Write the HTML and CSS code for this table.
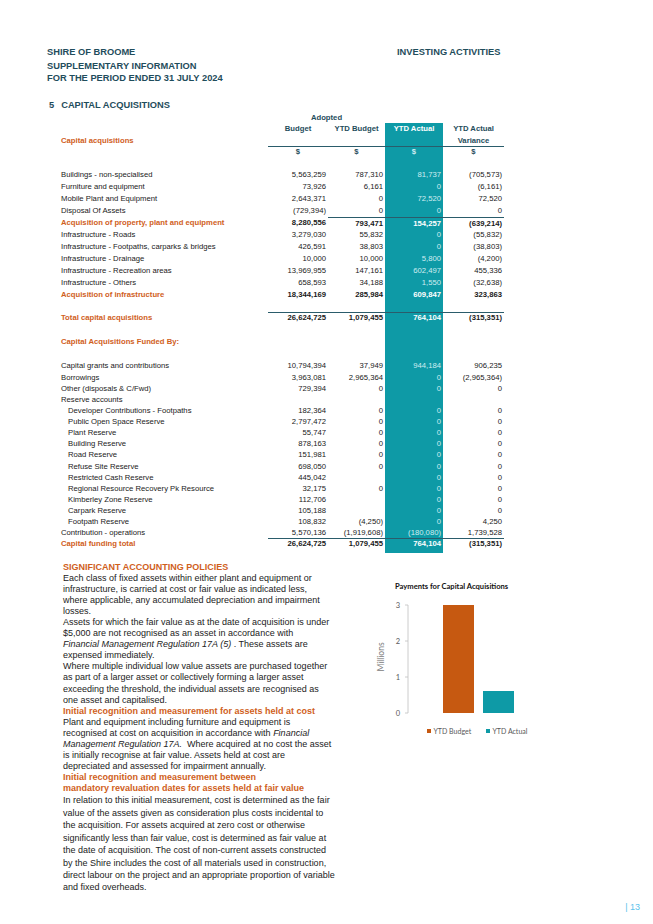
FILE: index.html
```html
<!DOCTYPE html>
<html lang="en">
<head>
<meta charset="utf-8">
<title>Shire of Broome - Capital Acquisitions</title>
<link rel="stylesheet" href="styles.css">
</head>
<body>
<div class="page">
  <header class="top">
    <div class="top-left">
      <div class="l1">SHIRE OF BROOME</div>
      <div class="l2">SUPPLEMENTARY INFORMATION</div>
      <div class="l3">FOR THE PERIOD ENDED 31 JULY 2024</div>
    </div>
    <div class="top-right">INVESTING ACTIVITIES</div>
  </header>

  <h2 class="sec"><span class="num">5</span>CAPITAL ACQUISITIONS</h2>

  <div class="tbl">
    <div class="row adopted"><div class="lbl"></div><div class="span2">Adopted</div></div>
    <div class="row hd"><div class="lbl"></div><div>Budget</div><div>YTD Budget</div><div class="act">YTD Actual</div><div>YTD Actual</div></div>
    <div class="row hd"><div class="lbl orange">Capital acquisitions</div><div></div><div></div><div class="act"></div><div>Variance</div></div>
    <div class="row hd dollar rule"><div class="lbl"></div><div>$</div><div>$</div><div class="act">$</div><div>$</div></div>
    <div class="row sp sp1"><div class="lbl"></div><div></div><div></div><div class="act"></div><div></div></div>

    <div class="row"><div class="lbl">Buildings - non-specialised</div><div>5,563,259</div><div>787,310</div><div class="act">81,737</div><div>(705,573)</div></div>
    <div class="row"><div class="lbl">Furniture and equipment</div><div>73,926</div><div>6,161</div><div class="act">0</div><div>(6,161)</div></div>
    <div class="row"><div class="lbl">Mobile Plant and Equipment</div><div>2,643,371</div><div>0</div><div class="act">72,520</div><div>72,520</div></div>
    <div class="row"><div class="lbl">Disposal Of Assets</div><div>(729,394)</div><div>0</div><div class="act">0</div><div>0</div></div>
    <div class="row b rule-thin"><div class="lbl">Acquisition of property, plant and equipment</div><div class="nr">8,280,556</div><div>793,471</div><div class="act">154,257</div><div>(639,214)</div></div>
    <div class="row"><div class="lbl">Infrastructure - Roads</div><div>3,279,030</div><div>55,832</div><div class="act">0</div><div>(55,832)</div></div>
    <div class="row"><div class="lbl">Infrastructure - Footpaths, carparks &amp; bridges</div><div>426,591</div><div>38,803</div><div class="act">0</div><div>(38,803)</div></div>
    <div class="row"><div class="lbl">Infrastructure - Drainage</div><div>10,000</div><div>10,000</div><div class="act">5,800</div><div>(4,200)</div></div>
    <div class="row"><div class="lbl">Infrastructure - Recreation areas</div><div>13,969,955</div><div>147,161</div><div class="act">602,497</div><div>455,336</div></div>
    <div class="row"><div class="lbl">Infrastructure - Others</div><div>658,593</div><div>34,188</div><div class="act">1,550</div><div>(32,638)</div></div>
    <div class="row b"><div class="lbl">Acquisition of infrastructure</div><div>18,344,169</div><div>285,984</div><div class="act">609,847</div><div>323,863</div></div>
    <div class="row sp sp2"><div class="lbl"></div><div></div><div></div><div class="act"></div><div></div></div>
    <div class="row b rule"><div class="lbl">Total capital acquisitions</div><div>26,624,725</div><div>1,079,455</div><div class="act">764,104</div><div>(315,351)</div></div>
    <div class="row sp"><div class="lbl"></div><div></div><div></div><div class="act"></div><div></div></div>
    <div class="row b"><div class="lbl">Capital Acquisitions Funded By:</div><div></div><div></div><div class="act"></div><div></div></div>
    <div class="row sp sp3"><div class="lbl"></div><div></div><div></div><div class="act"></div><div></div></div>

    <div class="row r2"><div class="lbl">Capital grants and contributions</div><div>10,794,394</div><div>37,949</div><div class="act">944,184</div><div>906,235</div></div>
    <div class="row r2"><div class="lbl">Borrowings</div><div>3,963,081</div><div>2,965,364</div><div class="act">0</div><div>(2,965,364)</div></div>
    <div class="row r2"><div class="lbl">Other (disposals &amp; C/Fwd)</div><div>729,394</div><div>0</div><div class="act">0</div><div>0</div></div>
    <div class="row r2"><div class="lbl">Reserve accounts</div><div></div><div></div><div class="act"></div><div></div></div>
    <div class="row r2 ind"><div class="lbl">Developer Contributions - Footpaths</div><div>182,364</div><div>0</div><div class="act">0</div><div>0</div></div>
    <div class="row r2 ind"><div class="lbl">Public Open Space Reserve</div><div>2,797,472</div><div>0</div><div class="act">0</div><div>0</div></div>
    <div class="row r2 ind"><div class="lbl">Plant Reserve</div><div>55,747</div><div>0</div><div class="act">0</div><div>0</div></div>
    <div class="row r2 ind"><div class="lbl">Building Reserve</div><div>878,163</div><div>0</div><div class="act">0</div><div>0</div></div>
    <div class="row r2 ind"><div class="lbl">Road Reserve</div><div>151,981</div><div>0</div><div class="act">0</div><div>0</div></div>
    <div class="row r2 ind"><div class="lbl">Refuse Site Reserve</div><div>698,050</div><div>0</div><div class="act">0</div><div>0</div></div>
    <div class="row r2 ind"><div class="lbl">Restricted Cash Reserve</div><div>445,042</div><div></div><div class="act">0</div><div>0</div></div>
    <div class="row r2 ind"><div class="lbl">Regional Resource Recovery Pk Resource</div><div>32,175</div><div>0</div><div class="act">0</div><div>0</div></div>
    <div class="row r2 ind"><div class="lbl">Kimberley Zone Reserve</div><div>112,706</div><div></div><div class="act">0</div><div>0</div></div>
    <div class="row r2 ind"><div class="lbl">Carpark Reserve</div><div>105,188</div><div></div><div class="act">0</div><div>0</div></div>
    <div class="row r2 ind"><div class="lbl">Footpath Reserve</div><div>108,832</div><div>(4,250)</div><div class="act">0</div><div>4,250</div></div>
    <div class="row r2"><div class="lbl">Contribution - operations</div><div>5,570,136</div><div>(1,919,608)</div><div class="act">(180,080)</div><div>1,739,528</div></div>
    <div class="row r2 b rule"><div class="lbl">Capital funding total</div><div>26,624,725</div><div>1,079,455</div><div class="act">764,104</div><div>(315,351)</div></div>
    <div class="row sp sp4"><div class="lbl"></div><div></div><div></div><div class="act"></div><div></div></div>
  </div>

  <div class="bottom">
    <div class="policies">
      <h3>SIGNIFICANT ACCOUNTING POLICIES</h3>
      <p>Each class of fixed assets within either plant and equipment or<br>infrastructure, is carried at cost or fair value as indicated less,<br>where applicable, any accumulated depreciation and impairment<br>losses.</p>
      <p>Assets for which the fair value as at the date of acquisition is under<br>$5,000 are not recognised as an asset in accordance with<br><em>Financial Management Regulation 17A (5)</em> . These assets are<br>expensed immediately.</p>
      <p>Where multiple individual low value assets are purchased together<br>as part of a larger asset or collectively forming a larger asset<br>exceeding the threshold, the individual assets are recognised as<br>one asset and capitalised.</p>
      <h3>Initial recognition and measurement for assets held at cost</h3>
      <p>Plant and equipment including furniture and equipment is<br>recognised at cost on acquisition in accordance with <em>Financial<br>Management Regulation 17A.</em>&nbsp; Where acquired at no cost the asset<br>is initially recognise at fair value. Assets held at cost are<br>depreciated and assessed for impairment annually.</p>
      <h3>Initial recognition and measurement between<br>mandatory revaluation dates for assets held at fair value</h3>
      <p class="last">In relation to this initial measurement, cost is determined as the fair<br>value of the assets given as consideration plus costs incidental to<br>the acquisition. For assets acquired at zero cost or otherwise<br>significantly less than fair value, cost is determined as fair value at<br>the date of acquisition. The cost of non-current assets constructed<br>by the Shire includes the cost of all materials used in construction,<br>direct labour on the project and an appropriate proportion of variable<br>and fixed overheads.</p>
    </div>
    <div class="chart">
      <svg width="200" height="180" viewBox="0 0 200 180">
        <text x="25" y="19" class="ct">Payments for Capital Acquisitions</text>
        <line x1="38" y1="35" x2="38" y2="143" class="axis"/>
        <path d="M35 35H38M35 71H38M35 107H38M35 143H38" class="axis"/>
        <text x="30" y="37.5" text-anchor="end" class="ax">3</text>
        <text x="30" y="73.5" text-anchor="end" class="ax">2</text>
        <text x="30" y="109.5" text-anchor="end" class="ax">1</text>
        <text x="30" y="145.5" text-anchor="end" class="ax">0</text>
        <text transform="translate(14 87) rotate(-90)" text-anchor="middle" class="axt">Millions</text>
        <rect x="73" y="35" width="31" height="108" class="bar-o"/>
        <rect x="113" y="121" width="31" height="22" class="bar-t"/>
        <rect x="57" y="159" width="4" height="4" class="bar-o"/>
        <text x="63.5" y="163.5" class="lg">YTD Budget</text>
        <rect x="116" y="159" width="4" height="4" class="bar-t"/>
        <text x="122.5" y="163.5" class="lg">YTD Actual</text>
      </svg>
    </div>
  </div>

  <footer class="pno">| 13</footer>
</div>
</body>
</html>
```

FILE: styles.css
```css
html, body {
  margin: 0;
  padding: 0;
  background: #ffffff;
}

body {
  font-family: "Liberation Sans", Arial, sans-serif;
  color: #1a1a1a;
}

.page {
  width: 653px;
  height: 924px;
  box-sizing: border-box;
  padding-left: 47px;
  overflow: hidden;
}

/* header */
.top {
  display: flex;
  padding-top: 45.5px;
  color: #1f4d5c;
  font-weight: bold;
  font-size: 9.3px;
}

.top-left {
  width: 350px;
}

.top-left .l1 {
  line-height: 13px;
  margin-bottom: 1.4px;
}

.top-left .l2,
.top-left .l3 {
  line-height: 12.6px;
}

.top-right {
  line-height: 13px;
}

.sec {
  margin: 14.3px 0 0 2px;
  font-size: 9.3px;
  line-height: 12.5px;
  font-weight: bold;
  color: #1f4d5c;
}

.sec .num {
  margin-right: 7px;
}

/* table */
.tbl {
  margin-left: 14px;
  width: 443px;
  font-size: 7.7px;
}

.row {
  display: grid;
  grid-template-columns: 207px 60px 57px 58px 61px;
  height: 12px;
  line-height: 12px;
}

.row > div {
  text-align: right;
  padding-right: 2px;
  white-space: nowrap;
  box-sizing: border-box;
}

.row > .lbl {
  text-align: left;
  padding-right: 0;
}

.row > .act {
  background: #0e9aa6;
  color: #cfedf1;
}

.adopted {
  height: 11px;
  line-height: 11px;
  font-weight: bold;
  color: #1f4d5c;
}

.adopted .span2 {
  grid-column: 2 / span 2;
  text-align: center;
  padding-right: 0;
}

.hd {
  font-weight: bold;
  color: #1f4d5c;
}

.hd > div {
  text-align: center;
  padding-right: 0;
}

.hd:nth-child(3) {
  height: 11px;
  line-height: 11px;
}

.hd > .act {
  color: #ffffff;
}

.orange {
  color: #d0601c;
}

.hd > .lbl.orange {
  text-align: left;
  color: #d0601c;
}

.dollar {
  height: 11px;
  line-height: 11px;
}

.dollar > .act {
  color: #cfedf1;
}

.rule > div:not(.lbl) {
  border-top: 1.5px solid #2a5c6b;
  line-height: 10.5px;
}

.dollar.rule > div:not(.lbl) {
  line-height: 9.5px;
}

.rule-thin > div:not(.lbl):not(.nr) {
  border-top: 1px solid #2a5c6b;
  line-height: 11px;
}

.rule-thin > .nr {
  line-height: 12px;
}

.b {
  font-weight: bold;
}

.b > .lbl {
  color: #d0601c;
}

.b > .act {
  color: #ffffff;
}

.sp {
  height: 12px;
}

.sp1 {
  height: 12px;
}

.sp2 {
  height: 11px;
}

.sp3 {
  height: 12.5px;
}

.sp4 {
  height: 3.5px;
}

.r2 {
  height: 11.125px;
  line-height: 11.125px;
}

.r2.rule > div:not(.lbl) {
  line-height: 9.6px;
}

.ind > .lbl {
  padding-left: 7px;
}

/* bottom section */
.bottom {
  display: flex;
  margin-top: 8.5px;
}

.policies {
  margin-left: 16px;
  width: 307px;
  font-size: 9px;
  line-height: 11.1px;
  white-space: nowrap;
  color: #222222;
}

.policies h3 {
  margin: 0;
  font-size: 9px;
  font-weight: bold;
  line-height: 11.1px;
  color: #d0601c;
}

.policies p {
  margin: 0;
}

.policies p.last {
  line-height: 12.4px;
}

.chart {
  margin-top: 8.5px;
}

.chart svg {
  display: block;
}

.ct {
  font-family: Lato, "Open Sans", sans-serif;
  font-weight: bold;
  font-size: 7.6px;
  fill: #111111;
}

.ax {
  font-family: Lato, sans-serif;
  font-size: 7.5px;
  fill: #595959;
}

.axt {
  font-family: Lato, sans-serif;
  font-size: 8.5px;
  fill: #808080;
}

.lg {
  font-family: Lato, sans-serif;
  font-size: 7px;
  fill: #595959;
}

.axis {
  stroke: #bfbfbf;
  stroke-width: 0.8;
  fill: none;
}

.bar-o {
  fill: #c65911;
}

.bar-t {
  fill: #0e9aa6;
}

/* page number */
.pno {
  margin-top: 7px;
  padding-right: 13px;
  text-align: right;
  font-size: 9px;
  line-height: 12px;
  color: #5bc3ec;
}
```
